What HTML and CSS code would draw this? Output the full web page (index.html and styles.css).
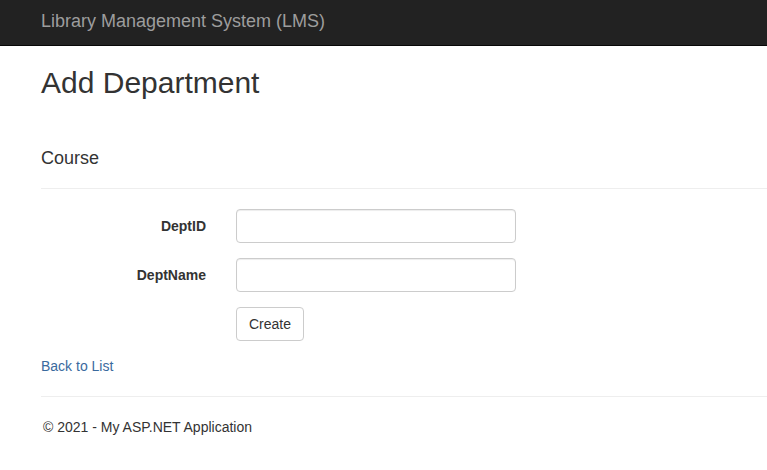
FILE: index.html
```html
<!DOCTYPE html>
<html lang="en">
<head>
<meta charset="utf-8">
<title>Add Department - Library Management System (LMS)</title>
<link rel="stylesheet" href="styles.css">
</head>
<body>
<header class="navbar">
  <a class="brand" href="#">Library Management System (LMS)</a>
</header>
<main class="page">
  <h2 class="title">Add Department</h2>
  <form class="form">
    <h4 class="subtitle">Course</h4>
    <hr class="rule">
    <div class="form-row">
      <label class="label" for="DeptID">DeptID</label>
      <input class="input" id="DeptID" type="text">
    </div>
    <div class="form-row">
      <label class="label" for="DeptName">DeptName</label>
      <input class="input" id="DeptName" type="text">
    </div>
    <div class="form-row">
      <span class="label"></span>
      <button class="btn" type="button">Create</button>
    </div>
  </form>
  <div class="back"><a class="link" href="#">Back to List</a></div>
  <hr class="rule">
  <footer class="footer"><p>&copy; 2021 - My ASP.NET Application</p></footer>
</main>
</body>
</html>
```

FILE: styles.css
```css
* { box-sizing: border-box; }
html, body { margin: 0; padding: 0; }
body {
  font-family: "Liberation Sans", Arial, sans-serif;
  font-size: 14px;
  line-height: 20px;
  color: #333;
  background: #fff;
  overflow: hidden;
}
.navbar {
  height: 46px;
  background: #222;
  border-bottom: 1px solid #080808;
  padding: 11px 0 0 41px;
}
.brand {
  font-size: 18px;
  line-height: 20px;
  color: #9d9d9d;
  text-decoration: none;
}
.page {
  padding-left: 41px;
}
.title {
  margin: 20px 0 0;
  font-size: 30px;
  line-height: 33px;
  font-weight: normal;
}
.form { margin: 0; }
.subtitle {
  margin: 49px 0 0;
  font-size: 18px;
  line-height: 20px;
  font-weight: normal;
}
.rule {
  margin: 20px 0;
  border: 0;
  border-top: 1px solid #eee;
  height: 0;
}
.form-row {
  display: flex;
  align-items: flex-start;
  gap: 30px;
  margin-bottom: 15px;
}
.label {
  width: 165px;
  flex: none;
  text-align: right;
  font-weight: bold;
  padding-top: 7px;
  line-height: 20px;
}
.input {
  width: 280px;
  height: 34px;
  padding: 6px 12px;
  font: inherit;
  color: #555;
  background: #fff;
  border: 1px solid #ccc;
  border-radius: 4px;
  box-shadow: inset 0 1px 1px rgba(0,0,0,.075);
}
.btn {
  height: 34px;
  padding: 6px 12px;
  font: inherit;
  line-height: 20px;
  color: #333;
  background: #fff;
  border: 1px solid #ccc;
  border-radius: 4px;
}
.back { margin-top: 2px; line-height: 20px; }
.link { color: #3a6a9e; text-decoration: none; }
.footer p { margin: 0; padding-left: 2px; }
```
